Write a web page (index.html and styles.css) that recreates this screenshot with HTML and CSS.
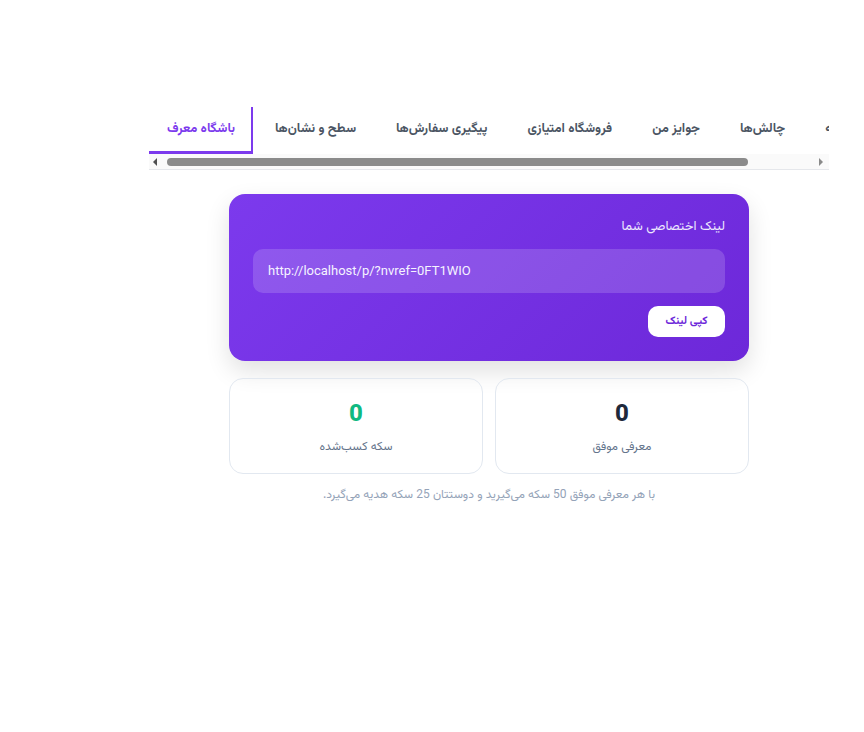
FILE: index.html
```html
<!DOCTYPE html>
<html lang="fa" dir="rtl">
<head>
<meta charset="utf-8">
<link rel="stylesheet" href="styles.css">
</head>
<body>
<main class="page">
  <div class="tabs-wrap">
    <div class="tabs-clip">
      <nav class="tabs">
        <a class="tab">خانه</a>
        <a class="tab">چالش‌ها</a>
        <a class="tab">جوایز من</a>
        <a class="tab">فروشگاه امتیازی</a>
        <a class="tab">پیگیری سفارش‌ها</a>
        <a class="tab">سطح و نشان‌ها</a>
        <a class="tab active">باشگاه معرف</a>
      </nav>
    </div>
    <div class="scrollbar">
      <span class="arrow arrow-left"></span>
      <span class="track"><span class="thumb"></span></span>
      <span class="arrow arrow-right"></span>
    </div>
  </div>

  <section class="content">
    <div class="link-card">
      <div class="link-label">لینک اختصاصی شما</div>
      <div class="link-box" dir="ltr">http://localhost/p/?nvref=0FT1WIO</div>
      <div class="link-actions">
        <button class="copy-btn">کپی لینک</button>
      </div>
    </div>

    <div class="stats">
      <div class="stat">
        <div class="stat-num">0</div>
        <div class="stat-label">معرفی موفق</div>
      </div>
      <div class="stat">
        <div class="stat-num green">0</div>
        <div class="stat-label">سکه کسب‌شده</div>
      </div>
    </div>

    <p class="note">با هر معرفی موفق 50 سکه می‌گیرید و دوستتان 25 سکه هدیه می‌گیرد.</p>
  </section>
</main>
</body>
</html>
```

FILE: styles.css
```css
* { box-sizing: border-box; }
html, body { margin: 0; padding: 0; background: #ffffff; }
body {
  font-family: Vazirmatn, Inter, "DejaVu Sans", sans-serif;
  color: #1f2937;
}
.page {
  padding: 107px 35px 0 149px;
}
.tabs-wrap {
  width: 680px;
  direction: ltr;
}
.tabs-clip {
  overflow: hidden;
  display: flex;
}
.tabs {
  direction: rtl;
  display: flex;
  flex-shrink: 0;
  gap: 4px;
}
.tab {
  display: block;
  height: 47px;
  line-height: 44px;
  padding: 0 18px;
  font-size: 13px;
  font-weight: 700;
  color: #4b5563;
  white-space: nowrap;
  border-bottom: 3px solid transparent;
}
.tab.active {
  color: #7c3aed;
  border-bottom-color: #7c3aed;
  box-shadow: inset -2px 0 0 #7c3aed;
}
.scrollbar {
  height: 16px;
  background: #fafafa;
  border-bottom: 1px solid #e5e7eb;
  display: flex;
  align-items: center;
}
.arrow {
  width: 0; height: 0;
  border-top: 4px solid transparent;
  border-bottom: 4px solid transparent;
  flex-shrink: 0;
}
.arrow-left {
  border-right: 4px solid #505050;
  margin: 0 8px 0 4px;
}
.arrow-right {
  border-left: 4px solid #8a8a8a;
  margin: 0 6px 0 auto;
}
.track {
  flex: 1;
  display: flex;
  padding-left: 2px;
}
.thumb {
  width: 581px;
  height: 8px;
  border-radius: 4px;
  background: #8b8b8b;
}
.content {
  width: 520px;
  margin: 24px 80px 0 80px;
  direction: rtl;
}
.link-card {
  background: linear-gradient(135deg, #7c3aed 0%, #6d28d9 100%);
  border-radius: 16px;
  padding: 22px 24px 24px;
  min-height: 167px;
  color: #fff;
  box-shadow: 0 10px 25px rgba(0, 0, 0, 0.12);
}
.link-label {
  font-size: 13px;
  line-height: 22px;
  color: #ede9fe;
  margin-bottom: 11px;
}
.link-box {
  height: 44px;
  line-height: 44px;
  border-radius: 10px;
  background: rgba(255, 255, 255, 0.16);
  padding: 0 15px;
  font-family: Roboto, "DejaVu Sans", sans-serif;
  font-size: 13px;
  color: #f5f3ff;
  text-align: left;
}
.link-actions {
  display: flex;
  margin-top: 13px;
}
.copy-btn {
  border: 0;
  background: #fff;
  color: #6d28d9;
  font-family: inherit;
  font-size: 11px;
  font-weight: 700;
  height: 31px;
  width: 77px;
  border-radius: 10px;
}
.stats {
  display: grid;
  grid-template-columns: 1fr 1fr;
  gap: 12px;
  margin-top: 17px;
}
.stat {
  height: 96px;
  border: 1px solid #e2e8f0;
  border-radius: 14px;
  text-align: center;
  padding-top: 20px;
}
.stat-num {
  font-size: 24px;
  font-weight: 800;
  line-height: 32px;
  color: #1e293b;
}
.stat-num.green { color: #10b981; }
.stat-label {
  margin-top: 7px;
  font-size: 12px;
  color: #64748b;
}
.note {
  margin: 12px 0 0;
  text-align: center;
  font-size: 12px;
  color: #94a3b8;
}
```
